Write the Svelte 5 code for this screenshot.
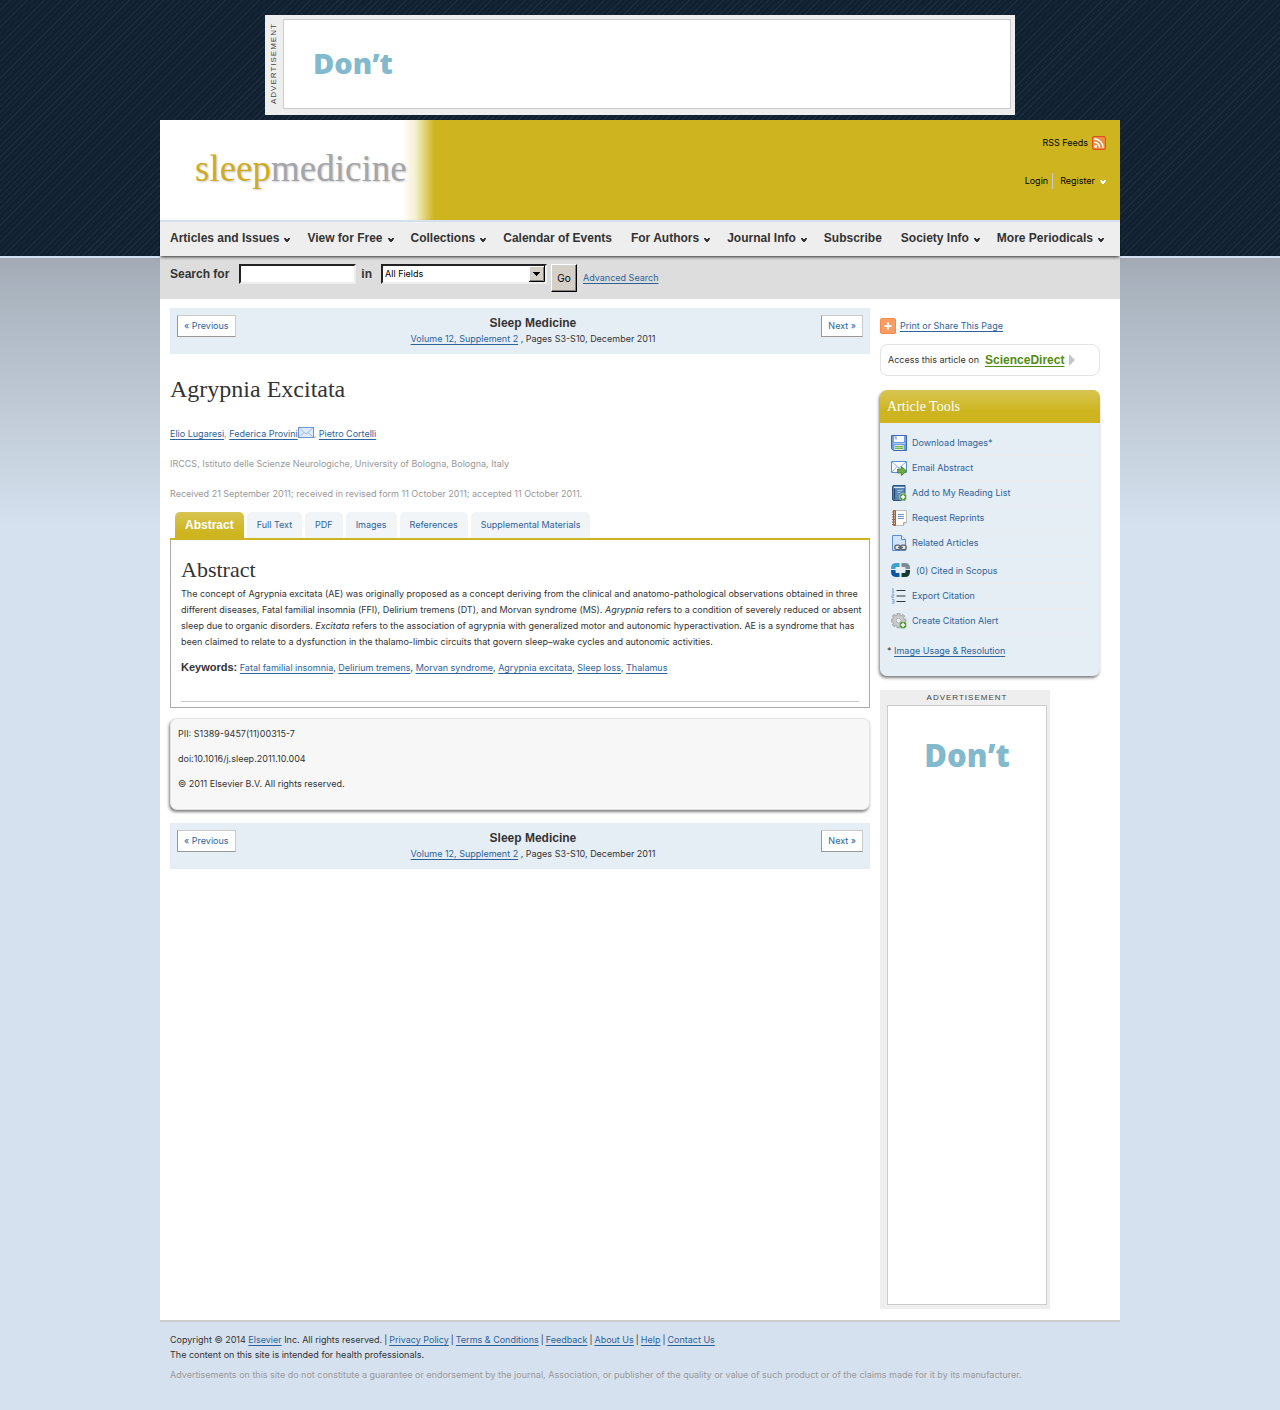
<script>
  const menu = [
    { label: 'Articles and Issues', drop: true },
    { label: 'View for Free', drop: true },
    { label: 'Collections', drop: true },
    { label: 'Calendar of Events', drop: false },
    { label: 'For Authors', drop: true },
    { label: 'Journal Info', drop: true },
    { label: 'Subscribe', drop: false },
    { label: 'Society Info', drop: true },
    { label: 'More Periodicals', drop: true }
  ];
  const tabs = ['Abstract', 'Full Text', 'PDF', 'Images', 'References', 'Supplemental Materials'];
  const keywords = ['Fatal familial insomnia', 'Delirium tremens', 'Morvan syndrome', 'Agrypnia excitata', 'Sleep loss', 'Thalamus'];
  const tools = [
    { icon: 'disk', label: 'Download Images*' },
    { icon: 'mail', label: 'Email Abstract' },
    { icon: 'book', label: 'Add to My Reading List' },
    { icon: 'notes', label: 'Request Reprints' },
    { icon: 'related', label: 'Related Articles' },
    { icon: 'scopus', label: '(0) Cited in Scopus' },
    { icon: 'list', label: 'Export Citation' },
    { icon: 'gear', label: 'Create Citation Alert' }
  ];
  const footerLinks = ['Privacy Policy', 'Terms & Conditions', 'Feedback', 'About Us', 'Help', 'Contact Us'];
  let query = $state('');
</script>

{#snippet caret(color)}
  <svg class="caret" width="6" height="4" viewBox="0 0 6 4" aria-hidden="true">
    <path d="M0 0h2v1h2V0h2v1.500H5V3H4v1H2V3H1V1.500H0z" fill={color} />
  </svg>
{/snippet}

{#snippet plusBadge()}
  <circle cx="12" cy="12" r="3.700" fill="#4c8c32" stroke="#d7ebca" stroke-width=".6" />
  <path d="M12 9.800v4.400M9.800 12h4.400" stroke="#fff" stroke-width="1.500" />
{/snippet}

{#snippet toolIcon(name)}
  {#if name === 'scopus'}
    <svg class="wide" width="20" height="16" viewBox="0 0 20 16" aria-hidden="true">
      <path d="M8.500 1H5.500Q0 1 0 6v1h4.500V5.800Q4.500 5 5.500 5h3z" fill="#3fa0cc" />
      <path d="M0 8v1.500Q0 15 5.500 15h3v-4h-3q-1 0-1-1V8z" fill="#0b56a4" />
      <path d="M10.500 1H14q5 0 5 5v1h-4.500V5.800q0-.8-1-.8h-3z" fill="#7d8b94" />
      <path d="M19 8v1.500q0 5.500-5 5.500h-3.500v-4h3q1 0 1-1V8z" fill="#16382f" />
    </svg>
  {:else}
    <svg width="16" height="16" viewBox="0 0 16 16" aria-hidden="true">
      {#if name === 'disk'}
        <path d="M.5.500h15v15h-13l-2-2z" fill="#6f9fe0" stroke="#3c68b4" />
        <path d="M3 1h10v6H3z" fill="#f5f9ff" />
        <path d="M5 1.500v3M3.500 2h1" stroke="#6d86ad" />
        <path d="M2 8.500h12" stroke="#a9c8f3" />
        <path d="M3.500 10h9v5h-9z" fill="#fff" />
        <path d="M4 11.500h8M4 13.500h8" stroke="#72b84a" stroke-width="1.300" />
      {:else if name === 'mail'}
        <path d="M.5 1.500h15v11H.5z" fill="#f7fbff" stroke="#5b8dcb" />
        <path d="M1 2l7 6 7-6M1 12l5-5.500M15 12l-5-5.500" fill="none" stroke="#8db4e2" />
        <path d="M6.500 9h4V6.500l5 4.500-5 4.500V13h-4z" fill="#6faa45" stroke="#3e7a2b" stroke-width=".8" />
      {:else if name === 'book'}
        <path d="M1.500 1.500Q1.500.500 3 .500h11v15H3q-1.500 0-1.500-1.500z" fill="#5c87b7" stroke="#2c4e7a" />
        <path d="M3 2.500h10.500" stroke="#dbe8f5" />
        <path d="M3.500 3.500v11" stroke="#27466e" stroke-width="1.200" />
        <path d="M6.500 5.500h5M6.500 7.500h3" stroke="#a9c5e2" />
        {@render plusBadge()}
      {:else if name === 'notes'}
        <path d="M3.500.500h12v12l-3 3h-9z" fill="#fbfbfa" stroke="#bebdb9" />
        <path d="M12.500 15.500v-3h3" fill="#dfe2e6" stroke="#aaa" />
        <path d="M2.500.500h2v15h-2z" fill="#e7b28f" stroke="#b5582e" />
        <path d="M1 2h3M1 4.500h3M1 7h3M1 9.500h3M1 12h3M1 14.500h3" stroke="#9a6a50" />
        <path d="M7 4.500h6M7 6.500h6M7 8.500h6" stroke="#6e95d2" />
      {:else if name === 'related'}
        <path d="M1.500.500h9l4 4v11h-13z" fill="#cfe3fa" stroke="#5b8ccc" />
        <path d="M10.500.500v4h4" fill="#f4f9ff" stroke="#5b8ccc" />
        <g fill="#e3e6ea" stroke="#5d6066" stroke-width="1.300">
          <rect x="3.800" y="10.200" width="5.500" height="4.500" rx="2" />
          <rect x="9.700" y="10.200" width="5.500" height="4.500" rx="2" />
          <path d="M7 12.500h5" />
        </g>
      {:else if name === 'list'}
        <path d="M5.500 2.500h9M5.500 8h9M5.500 13.500h9" stroke="#33373d" />
        <path d="M1 1l1-.5V4M.7 4.200h2.600M.8 6.200h2v1.600h-2v1.600h2.400M.8 11.500h2.200v3.700H.8M1.200 13.300h1.600" fill="none" stroke="#7ea6dc" />
      {:else if name === 'gear'}
        <g fill="#c0c2c3" stroke="#8c8f91" stroke-width=".6">
          {#each [0, 45, 90, 135, 180, 225, 270, 315] as a}
            <path d="M6.200 0h2.600l.6 3.500H5.600z" transform="rotate({a} 7.500 7.500)" />
          {/each}
        </g>
        <circle cx="7.500" cy="7.500" r="4" fill="#e7f0f7" stroke="#c8cacb" stroke-width="2.600" />
        <circle cx="7.500" cy="7.500" r="2.300" fill="#e7f0f7" stroke="#96999b" stroke-width=".7" />
        {@render plusBadge()}
      {/if}
    </svg>
  {/if}
{/snippet}

{#snippet issueNav()}
  <nav class="issue-nav" aria-label="Issue">
    <a class="step" href="#previous">« Previous</a>
    <div class="issue">
      <strong>Sleep Medicine</strong>
      <span><a href="#volume">Volume 12, Supplement 2</a> , Pages S3-S10, December 2011</span>
    </div>
    <a class="step" href="#next">Next »</a>
  </nav>
{/snippet}

<div class="backdrop">
  <div class="page">
    <aside class="banner">
      <span class="banner-label">ADVERTISEMENT</span>
      <div class="banner-slot">Don’t</div>
    </aside>

    <header class="masthead">
      <a class="logo" href="#home"><span>sleep</span>medicine</a>
      <div class="account">
        <a class="rss" href="#rss">RSS Feeds
          <svg width="14" height="14" viewBox="0 0 14 14" aria-hidden="true">
            <rect x=".5" y=".5" width="13" height="13" rx="1.500" fill="#f08a3c" stroke="#dc5318" />
            <circle cx="3.600" cy="10.500" r="1.400" fill="#fff" />
            <path d="M2.200 6.300a5.500 5.500 0 0 1 5.500 5.500M2.200 2.900a8.900 8.900 0 0 1 8.900 8.900" fill="none" stroke="#fff" stroke-width="1.600" />
          </svg>
        </a>
        <div class="signin">
          <a href="#login">Login</a>
          <a class="register" href="#register">Register {@render caret('#fff')}</a>
        </div>
      </div>
    </header>

    <nav class="menu" aria-label="Main">
      {#each menu as item}
        <a href="#menu" class:drop={item.drop}>{item.label}{#if item.drop}{@render caret('#333')}{/if}</a>
      {/each}
    </nav>

    <form class="search" onsubmit={(e) => e.preventDefault()}>
      <label for="term">Search for</label>
      <input id="term" type="text" bind:value={query} />
      <label for="field">in</label>
      <div class="select">
        <select id="field"><option>All Fields</option><option>Title</option><option>Author</option></select>
        <svg width="16" height="16" viewBox="0 0 16 16" aria-hidden="true">
          <path d="M0 0h16v16H0z" fill="#d4d0c8" />
          <path d="M.5 15V.500H15" fill="none" stroke="#fff" />
          <path d="M0 15.500h15.500V0" fill="none" stroke="#000" />
          <path d="M1 14.500h13.500V1" fill="none" stroke="#808080" />
          <path d="M4 6h7v1h-1v1H9v1H8v1H7V9H6V8H5V7H4z" fill="#000" />
        </svg>
      </div>
      <button type="submit">Go</button>
      <a href="#advanced">Advanced Search</a>
    </form>

    <div class="columns">
      <main>
        {@render issueNav()}

        <h1>Agrypnia Excitata</h1>
        <p class="authors"><a href="#lugaresi">Elio Lugaresi</a>, <a href="#provini">Federica Provini<svg width="16" height="11" viewBox="0 0 16 11" aria-label="Email">
            <rect x=".5" y=".5" width="15" height="10" fill="#deebfb" stroke="#6794d3" />
            <path d="M1.500 1.500L8 7l6.500-5.500M1.500 9.500L6 5.500M14.500 9.500L10 5.500" fill="none" stroke="#9dbce8" />
          </svg></a>, <a href="#cortelli">Pietro Cortelli</a></p>
        <p class="meta">IRCCS, Istituto delle Scienze Neurologiche, University of Bologna, Bologna, Italy</p>
        <p class="meta">Received 21 September 2011; received in revised form 11 October 2011; accepted 11 October 2011.</p>

        <nav class="tabs" aria-label="Article views">
          {#each tabs as tab, i}
            <a href="#tab" class:active={i === 0}>{tab}</a>
          {/each}
        </nav>

        <section class="abstract">
          <h2>Abstract</h2>
          <p class="body">The concept of Agrypnia excitata (AE) was originally proposed as a concept deriving from the clinical and anatomo-pathological observations obtained in three<br />
            different diseases, Fatal familial insomnia (FFI), Delirium tremens (DT), and Morvan syndrome (MS). <em>Agrypnia</em> refers to a condition of severely reduced or absent<br />
            sleep due to organic disorders. <em>Excitata</em> refers to the association of agrypnia with generalized motor and autonomic hyperactivation. AE is a syndrome that has<br />
            been claimed to relate to a dysfunction in the thalamo-limbic circuits that govern sleep–wake cycles and autonomic activities.</p>
          <p class="keywords"><strong>Keywords:</strong>
            {#each keywords as word, i}<a href="#keyword">{word}</a>{#if i < keywords.length - 1},{' '}{/if}{/each}
          </p>
          <hr />
        </section>

        <section class="info">
          <p>PII: S1389-9457(11)00315-7</p>
          <p>doi:10.1016/j.sleep.2011.10.004</p>
          <p>© 2011 Elsevier B.V. All rights reserved.</p>
        </section>

        {@render issueNav()}
      </main>

      <aside class="side">
        <a class="share" href="#share">
          <svg width="16" height="16" viewBox="0 0 16 16" aria-hidden="true">
            <rect x=".5" y=".5" width="15" height="15" rx="1.500" fill="#fd9c64" stroke="#f58a4b" />
            <path d="M8 4.500v7M4.500 8h7" stroke="#fff" stroke-width="2" />
          </svg>
          <span>Print or Share This Page</span>
        </a>
        <p class="access">Access this article on <a href="#sd">ScienceDirect</a>
          <svg width="6" height="12" viewBox="0 0 6 12" aria-hidden="true"><path d="M0 0l6 6-6 6z" fill="#c5c5c5" /></svg>
        </p>

        <section class="tools">
          <h3>Article Tools</h3>
          <ul>
            {#each tools as tool}
              <li class:scopus={tool.icon === 'scopus'}><a href="#tool">{@render toolIcon(tool.icon)}<span>{tool.label}</span></a></li>
            {/each}
          </ul>
          <p>* <a href="#usage">Image Usage &amp; Resolution</a></p>
        </section>

        <div class="skyscraper">
          <span>ADVERTISEMENT</span>
          <div>Don’t</div>
        </div>
      </aside>
    </div>

    <footer>
      <p>Copyright © 2014 <a href="#elsevier">Elsevier</a> Inc. All rights reserved.{#each footerLinks as link}<span class="divider">|</span><a href="#footer">{link}</a>{/each}</p>
      <p>The content on this site is intended for health professionals.</p>
      <p class="note">Advertisements on this site do not constitute a guarantee or endorsement by the journal, Association, or publisher of the quality or value of such product or of the claims made for it by its manufacturer.</p>
    </footer>
  </div>
</div>

<style>
  :global(body) {
    background: #d6e1ef;
    color: #333;
    font: 9px/16px Inter, "Liberation Sans", sans-serif;
  }
  .backdrop {
    background:
      linear-gradient(#d6e1ef, #d6e1ef) 0 256px / 100% 2px no-repeat,
      repeating-linear-gradient(135deg, #122131 0 3px, #192c3c 3px 4px) 0 0 / 100% 256px no-repeat,
      linear-gradient(#a3aab6, #abb5c0 40px, #d6e1ef 270px) 0 258px / 100% 270px no-repeat;
  }
  .page { max-width: 960px; margin: 0 auto; padding-top: 15px; }
  h1, h2, h3, p, ul { margin: 0; padding: 0; }
  a { color: #2d6399; text-underline-offset: 2px; }

  .banner {
    display: flex;
    box-sizing: border-box;
    max-width: 750px;
    height: 100px;
    margin: 0 auto 5px;
    padding: 4px 4px 6px 0;
    background: #eee;
  }
  .banner-label {
    width: 18px;
    writing-mode: vertical-rl;
    transform: rotate(180deg);
    text-align: center;
    font: 8px/18px "Liberation Sans", sans-serif;
    letter-spacing: 1px;
    color: #444;
  }
  .banner-slot {
    flex: 1;
    padding: 25px 29px 0;
    border: 1px solid #ccc;
    background: #fff;
    font: 800 29px/36px "Open Sans", sans-serif;
    color: #82b9cd;
  }

  .masthead {
    display: flex;
    justify-content: space-between;
    min-height: 100px;
    background: linear-gradient(90deg, #fff 242px, #f5f0d2 255px, #e2d57d 264px, #ceb520 274px);
  }
  .logo {
    padding: 25px 0 0 35px;
    font: 37px/48px "Liberation Serif", serif;
    color: #a4a5a9;
    text-decoration: none;
    text-shadow: 1px 1px 2px #ccc;
  }
  .logo span { color: #cfac1e; }
  .account {
    display: flex;
    flex-direction: column;
    align-items: flex-end;
    gap: 22px;
    padding: 15px 14px 0 0;
  }
  .account a { color: #000; text-decoration: none; }
  .rss, .signin, .register { display: flex; align-items: center; }
  .rss { gap: 4px; }
  .register { gap: 5px; margin-left: 4px; padding-left: 7px; border-left: 1px solid #ccc; }

  .menu {
    position: relative;
    display: flex;
    padding: 0 10px;
    border-top: 2px solid #d6e1ef;
    background: #eee;
    box-shadow: 0 2px 3px -1px rgba(0, 0, 0, .8);
    font: bold 12px/33px "Liberation Sans", sans-serif;
  }
  .menu a {
    display: flex;
    align-items: center;
    gap: 5px;
    margin-right: 19px;
    padding-bottom: 1px;
    color: #333;
    text-decoration: none;
    white-space: nowrap;
  }
  .menu a.drop { margin-right: 17px; }
  .caret { flex: none; margin-top: 2px; }

  .search {
    display: flex;
    align-items: flex-start;
    height: 35px;
    padding: 8px 10px 0;
    background: #ddd;
  }
  .search label {
    font: bold 12px/20px "Liberation Sans", sans-serif;
  }
  .search input, .search select {
    box-sizing: border-box;
    height: 20px;
    padding: 0 2px;
    border: 2px solid;
    border-color: #222 #eee #eee #222;
    border-radius: 0;
    background: #fff;
    color: #000;
    font: 9px/16px Inter, sans-serif;
  }
  .search input { width: 117px; margin: 0 5px 0 10px; }
  .select { position: relative; width: 166px; margin: 0 4px 0 9px; }
  .search select { width: 100%; appearance: none; }
  .select svg { position: absolute; top: 2px; right: 2px; pointer-events: none; }
  .search button {
    width: 26px;
    height: 28px;
    padding: 0;
    border: 1px solid;
    border-color: #fff #000 #000 #fff;
    background: #d4d0c8;
    box-shadow: inset -1px -1px #808080;
    color: #000;
    font: 10px/16px Inter, sans-serif;
  }
  .search a { margin-left: 6px; line-height: 28px; }

  .columns {
    display: flex;
    gap: 10px;
    padding: 9px 20px 11px 10px;
    background: #fff;
  }
  main { flex: 1; min-width: 0; }
  .side { flex: none; width: 220px; }

  .issue-nav {
    display: flex;
    justify-content: space-between;
    align-items: flex-start;
    padding: 7px;
    background: #e6eef5;
  }
  .step {
    padding: 2px 6px;
    border: 1px solid;
    border-color: #ccc #ccc #999 #999;
    background: #fff;
    text-decoration: none;
  }
  .issue { display: flex; flex-direction: column; align-items: center; padding-left: 9px; }
  .issue strong { font: bold 12px/16px "Liberation Sans", sans-serif; }

  h1 { margin: 20px 0 22px; font: 24px/30px "Liberation Serif", serif; }
  .authors { margin-bottom: 14px; color: #999; }
  .authors svg { vertical-align: -1px; }
  .meta { margin-bottom: 14px; color: #999; }
  .meta + .meta { margin-bottom: 10px; }

  .tabs {
    display: flex;
    gap: 3px;
    padding: 0 5px;
    border-bottom: 2px solid #ceb520;
  }
  .tabs a {
    padding: 0 10px;
    border-radius: 5px 5px 0 0;
    background: #f1f5f8;
    line-height: 26px;
    text-decoration: none;
  }
  .tabs a.active {
    background: linear-gradient(#d8c552, #ceb520 80%);
    color: #fff;
    font-weight: bold;
    font-size: 12px;
    font-family: "Liberation Sans", sans-serif;
  }
  .abstract { padding: 16px 10px 5px; border: 1px solid #aaa; border-top: 0; }
  h2 { font: 22px/28px "Liberation Serif", serif; }
  .body { padding-top: 2px; white-space: nowrap; }
  .keywords { margin: 9px 0 25px; }
  .keywords strong { font: bold 11px/16px "Liberation Sans", sans-serif; }
  hr { height: 1px; margin: 0; border: 0; background: #ccc; }

  .info {
    margin: 10px 0 13px;
    padding: 7px 7px 17px;
    border: 1px solid #e3e3e3;
    border-radius: 7px;
    background: #f7f7f7;
    box-shadow: -1px 2px 3px rgba(0, 0, 0, .5);
  }
  .info p { margin-bottom: 9px; }
  .info p:last-child { margin-bottom: 0; }

  .share { display: flex; gap: 4px; align-items: center; padding-top: 10px; }
  .access {
    display: flex;
    align-items: center;
    margin: 10px 0 14px;
    padding: 7px;
    border: 1px solid #e3e3e3;
    border-radius: 8px;
  }
  .access a {
    margin: 0 5px 0 6px;
    color: #528c12;
    font: bold 12px/16px "Liberation Sans", sans-serif;
  }
  .tools {
    border-radius: 7px;
    background: #e6eef5;
    box-shadow: -1px 2px 3px rgba(0, 0, 0, .5);
  }
  .tools h3 {
    padding-left: 7px;
    border-radius: 7px 7px 0 0;
    background: linear-gradient(#d8c552, #cfb828 55%, #ceb520 60%);
    color: #fff;
    font: 14px/33px "Liberation Serif", serif;
  }
  .tools ul { list-style: none; padding: 8px 7px 4px; }
  .tools li { border-bottom: 1px solid #ebeef0; line-height: 24px; }
  .tools li a { display: flex; align-items: center; gap: 5px; padding-left: 4px; text-decoration: none; }
  .tools .scopus { padding-top: 3px; }
  .wide { margin-bottom: 2px; }
  .tools p { padding: 5px 7px 17px; }

  .skyscraper {
    box-sizing: border-box;
    width: 170px;
    margin-top: 14px;
    padding: 0 3px 4px 7px;
    background: #eee;
    text-align: center;
  }
  .skyscraper span {
    display: block;
    padding-top: 1px;
    font: 8px/14px "Liberation Sans", sans-serif;
    letter-spacing: 1px;
    color: #444;
  }
  .skyscraper div {
    min-height: 568px;
    padding-top: 30px;
    border: 1px solid #ccc;
    background: #fff;
    font: 800 31px/38px "Open Sans", sans-serif;
    color: #82b9cd;
  }

  footer { padding: 10px 10px 28px; border-top: 2px solid #ccc; line-height: 15px; }
  .divider { margin: 0 2px; }
  .note { padding-top: 5px; color: #999; }
</style>
